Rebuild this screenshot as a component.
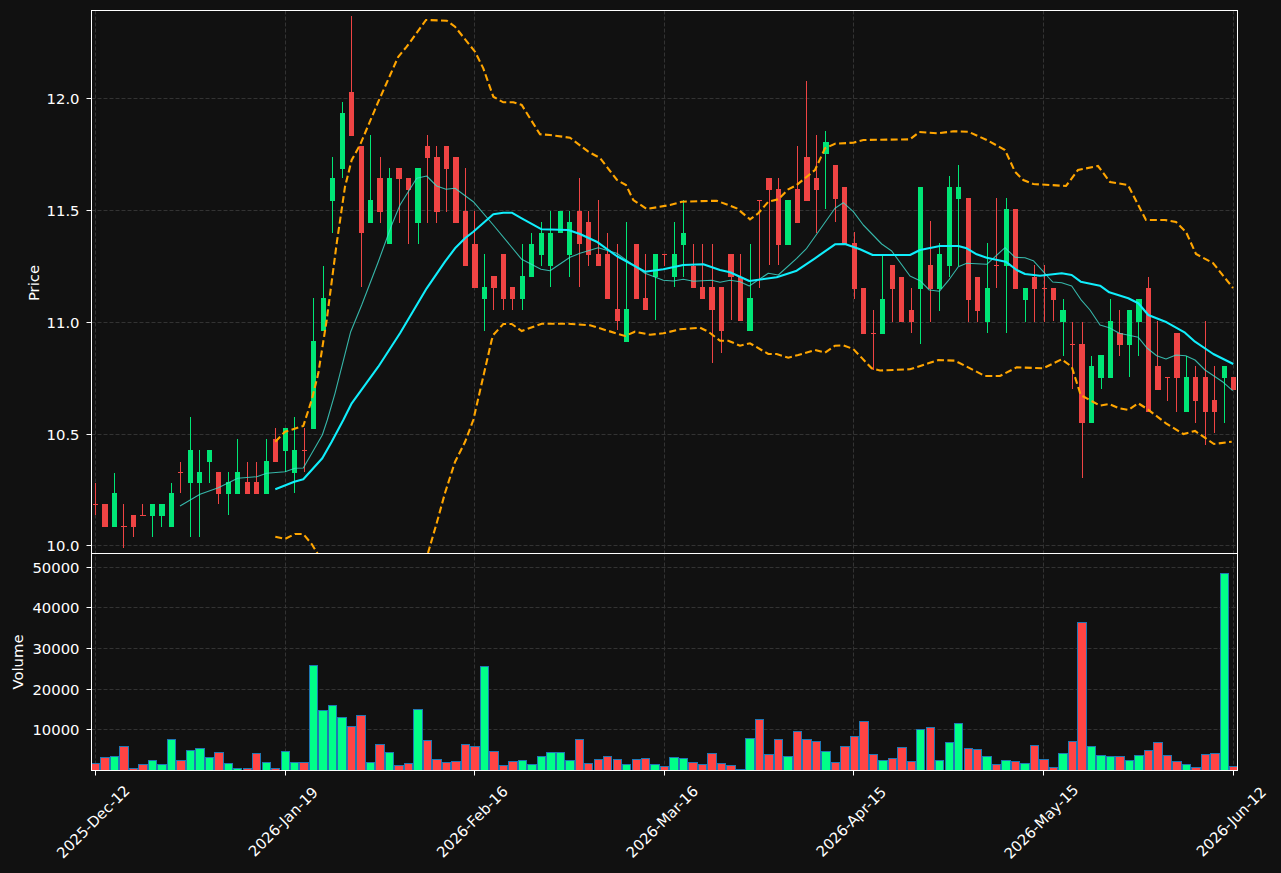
const UP_BODY = "#00e676";
const DOWN_BODY = "#ef4444";
const UP_VOL = "#00ff88";
const DOWN_VOL = "#ff4444";

// pixel rows read off the picture: high, body top, body bottom, low, up?
const candles: number[][] = [
  [483,504,504,515,0],[504,504,527,527,0],[473,493,527,527,1],[504,526,526,548,0],[515,515,527,537,0],
  [504,515,515,515,0],[504,504,516,537,1],[504,504,516,527,1],[483,493,527,527,1],[462,472,472,493,0],
  [417,450,483,537,1],[450,472,483,537,1],[450,450,462,483,1],[472,472,494,504,0],[472,482,494,515,1],
  [439,472,494,494,1],[462,482,494,494,0],[462,482,494,494,0],[439,461,494,494,1],[428,439,462,462,0],
  [428,428,451,472,1],[417,450,473,493,1],[428,450,450,472,0],[298,341,429,429,1],[266,298,331,331,1],
  [157,178,201,233,1],[102,113,169,178,1],[16,92,136,136,0],[146,146,233,287,0],[135,200,223,223,1],
  [157,178,212,223,0],[168,178,244,244,1],[168,168,179,223,0],[178,178,190,244,0],[168,168,223,244,1],
  [135,146,158,223,0],[146,157,212,223,0],[146,146,169,212,0],[157,157,223,223,0],[168,211,266,266,0],
  [211,244,288,288,0],[254,287,299,331,1],[276,276,288,310,0],[254,254,299,310,0],[287,287,299,310,0],
  [244,276,299,310,1],[233,244,277,277,1],[222,233,255,266,1],[211,233,266,287,1],[211,211,233,233,1],
  [211,222,255,277,1],[178,211,244,287,0],[211,222,255,266,0],[200,254,266,266,0],[233,254,299,299,0],
  [244,309,321,330,0],[222,309,342,342,1],[244,244,299,299,0],[254,298,310,310,0],[254,254,277,320,1],
  [254,254,254,266,0],[222,254,277,287,1],[200,233,245,277,1],[244,266,288,288,0],[244,287,299,299,0],
  [244,287,310,363,0],[287,287,331,353,0],[254,254,277,320,0],[254,277,321,321,0],[244,298,331,331,1],
  [200,200,200,288,0],[178,178,190,265,0],[178,189,245,265,0],[200,200,245,245,1],[146,189,223,223,0],
  [81,157,201,201,0],[135,178,190,233,0],[131,142,154,209,1],[165,165,199,222,0],[187,187,244,244,0],
  [232,243,289,299,0],[288,288,334,334,0],[310,333,333,370,0],[255,299,334,334,1],[265,265,289,322,0],
  [277,277,322,322,0],[288,310,322,333,0],[187,187,289,344,1],[221,265,289,322,0],[243,254,289,311,1],
  [176,187,266,277,1],[165,187,199,266,1],[198,198,300,322,0],[277,277,311,322,0],[243,288,322,333,1],
  [198,265,265,288,0],[198,209,266,333,1],[209,209,289,289,0],[288,288,300,322,1],[265,277,289,322,0],
  [265,288,288,322,0],[288,288,300,321,0],[299,310,322,356,1],[322,344,344,389,0],[322,344,423,478,0],
  [356,366,423,423,1],[355,355,378,389,1],[299,321,378,378,1],[310,333,345,356,0],[310,310,345,377,1],
  [299,299,322,356,1],[277,288,412,412,0],[321,366,390,390,0],[377,377,377,401,0],[333,333,378,412,0],
  [356,377,412,412,1],[366,377,401,423,0],[321,377,412,445,0],[366,400,412,433,0],[366,366,378,423,1],
  [377,377,390,390,0],
];

const volumeTops = [
  763,757,756,746,768,764,760,764,739,760,750,748,757,752,763,768,768,753,762,768,
  751,762,762,665,710,705,717,726,715,762,744,752,765,763,709,740,759,762,761,744,
  746,666,751,765,761,760,764,756,752,752,760,739,763,759,756,759,764,759,758,764,
  766,757,758,762,764,753,763,765,769,738,719,754,739,756,731,739,741,751,762,746,
  736,721,754,760,758,747,761,729,727,760,742,723,748,749,756,764,760,761,763,745,
  759,767,753,741,622,746,755,756,756,760,755,750,742,755,761,764,767,754,753,573,766,
];

const slowLine = [
  [275.3,489.3],[294.3,481.7],[303.3,479.3],[322.3,458.3],[331.7,441.7],[343.3,420],[351.7,403.3],[378.3,366.7],
  [400,333.3],[426.7,288.3],[445,261.7],[455,248.3],[465,238.3],[473.3,231.7],[493.3,214.3],[503.3,212.7],
  [511.7,212.7],[521.7,218.3],[541.7,229.3],[568.3,230],[580,234],[596.7,241.7],[616.7,256],[626.7,261.7],
  [645,271.7],[663.3,269.3],[683.3,265],[703.3,264.3],[720,270],[730,272.3],[749.3,281],[776.7,277.3],
  [796.7,270.7],[815,258.3],[835,244.3],[845,244],[860,249.3],[872.7,255],[910,255],[920,250],[940,246],
  [958.3,246],[966.7,248.3],[976.7,254.3],[986.7,257.7],[1005.7,261.7],[1016.7,270],[1025,274],[1040,275.7],
  [1061.7,273.3],[1071.7,275],[1080.7,281.7],[1100,285.7],[1109.3,292.3],[1128.3,298.3],[1138.3,303.3],
  [1148.3,315],[1166.7,322.3],[1185,332.7],[1195,341.7],[1213.3,354],[1233.3,364],
];

const fastLine = [
  [180,506],[200,494.3],[218.3,487.7],[237.7,478.3],[256.7,476.7],[266.7,473.3],[285,471.7],[295,468.3],
  [303.3,468],[322.3,435],[327.3,420],[335,393.3],[350.7,331.7],[361.7,305],[378.3,261.7],[391.7,225],
  [400,205],[416.7,178.3],[426.7,176],[436.7,186],[446,189.3],[455,188.3],[473.3,201.7],[493.3,225],
  [521.7,259.3],[541,269.3],[550,270.7],[570,257.3],[580,253.3],[598.3,247.7],[616.7,253.3],[645,273.3],
  [663.3,280.3],[673.3,281],[683.3,279.3],[693.3,281.3],[711.7,280.3],[720,282.3],[730,280.3],[740,281.7],
  [749.3,286],[768.3,273.3],[778.3,275],[796.7,258.3],[806.7,248.3],[835,208.3],[843.3,202.7],[853.3,211.7],
  [863.3,225],[881.7,244],[891.7,251],[910,276],[920,280.7],[929.3,290],[939.3,291.3],[948.3,280.7],
  [958.3,266.7],[966.7,263.3],[986.7,264.3],[1005,247.7],[1015,257.3],[1025,257.7],[1033.3,260.7],
  [1052.7,282],[1061.7,282.7],[1071.7,286],[1080.7,299.3],[1090,310],[1100,325],[1109.3,327.7],[1119.3,333.3],
  [1138.3,337.3],[1147.3,348.3],[1156.7,355.7],[1166,359],[1176,355],[1185.7,355.7],[1195,360],[1205,370],
  [1223.3,382.3],[1232.7,390.7],
];

const upperBand = [
  [275.3,441.7],[285,431.7],[303.3,426],[311.7,400],[318.3,373.3],[326.7,320],[336.7,243.3],[345,186.7],
  [351.7,160],[360,145],[378.3,101.7],[398.3,56.7],[406.7,46.7],[426,20],[446.7,20.7],[455,26.7],[475,51.7],
  [483.3,68.3],[493.3,96.7],[503.3,102.3],[513.3,102.3],[521.7,105],[540,134.3],[550,135],[570,137.7],
  [588.3,151.7],[600,158],[617,180],[626,185],[633.3,200],[646.7,209],[670,205],[681.7,201.7],[716.7,200.7],
  [736.7,208.3],[750,219.3],[758.3,213.3],[768.3,201.7],[778.3,199.3],[788.3,189.3],[796.7,185],[815,170],
  [825,148.3],[835,143.7],[853.3,142.7],[863.3,140],[910,139.3],[919.3,132],[938.3,133.3],[953.3,131.3],
  [968.3,131.7],[986.7,140],[1005,150],[1015,171.7],[1023.3,180],[1033.3,184],[1050,185],[1066,186],
  [1078,170],[1098,166],[1110,182],[1128,185],[1146,220],[1165,220],[1176,222],[1186,232],[1196,254],
  [1213,263],[1233,288],
];

const lowerBand = [
  [275.3,536.7],[285,539],[295,534],[303.3,534],[311.7,544],[319,556],[425,556],[428,553],[437,522],[445,493],
  [455,462],[465,442],[473.3,420],[491.7,340],[493.3,335],[503.3,324],[511.7,324],[521.7,331],[541.7,323.7],
  [568.3,323.7],[590,325.3],[625,336],[635,331.7],[650,334.7],[663.3,333.3],[680,329.3],[700,327.7],
  [708.3,331.7],[720,340.7],[728.3,340.7],[740,345.7],[750,343.3],[768.3,354],[776.7,354],[788.3,357.7],
  [798.3,355],[815,350],[825,352.7],[835,345.7],[843.3,345.3],[853.3,349],[871.7,368.3],[880,370.5],[910,369.3],
  [928.3,363.3],[938.3,360],[955,360.7],[973.3,370],[985,376],[1000,376],[1016.7,367.3],[1043.3,368.3],
  [1061.7,359.3],[1071.7,366.7],[1080.7,395],[1100,405.7],[1109.3,404],[1119.3,408.3],[1128.3,410],
  [1138.3,403.3],[1147.3,409],[1166,423.3],[1183.3,434],[1195,431],[1214,444],[1231.7,441.7],
];

const xTicks = [
  { x: 95.5, label: "2025-Dec-12" },
  { x: 285.5, label: "2026-Jan-19" },
  { x: 474.5, label: "2026-Feb-16" },
  { x: 664.5, label: "2026-Mar-16" },
  { x: 853.5, label: "2026-Apr-15" },
  { x: 1043.5, label: "2026-May-15" },
  { x: 1233.5, label: "2026-Jun-12" },
];
const priceTicks = [
  { y: 98.5, label: "12.0" },
  { y: 210.5, label: "11.5" },
  { y: 322.5, label: "11.0" },
  { y: 434.5, label: "10.5" },
  { y: 545.5, label: "10.0" },
];
const volumeTicks = [
  { y: 567.5, label: "50000" },
  { y: 607.5, label: "40000" },
  { y: 648.5, label: "30000" },
  { y: 689.5, label: "20000" },
  { y: 729.5, label: "10000" },
];

const LEFT = 91.5;
const RIGHT = 1237.5;
const TOP = 10.5;
const SPLIT = 553.5;
const BOTTOM = 770.5;

const barX = (i: number) => 95.5 + i * 9.486;
const pts = (line: number[][]) => line.map(p => p.join(",")).join(" ");
const label = "font-['DejaVu_Sans',sans-serif] text-[14.8px] fill-white";

export default function App() {
  return (
    <div className="w-[1281px] h-[873px] overflow-hidden bg-[#111111]">
      <svg width="1281" height="873" className="block">
        <defs>
          <clipPath id="price-clip">
            <rect x={LEFT} y={TOP} width={RIGHT - LEFT} height={SPLIT - TOP} />
          </clipPath>
          <clipPath id="volume-clip">
            <rect x={LEFT} y={SPLIT} width={RIGHT - LEFT} height={BOTTOM - SPLIT} />
          </clipPath>
        </defs>

        {/* grid */}
        <g stroke="#333333" strokeWidth="1" strokeDasharray="4 2">
          {xTicks.map(t => (
            <line key={t.label} x1={t.x} x2={t.x} y1={TOP} y2={BOTTOM} />
          ))}
          {[...priceTicks, ...volumeTicks].map(t => (
            <line key={t.label} x1={LEFT} x2={RIGHT} y1={t.y} y2={t.y} />
          ))}
        </g>

        {/* candles */}
        <g clipPath="url(#price-clip)">
          {candles.map(([high, top, bottom, low, up], i) => {
            const color = up ? UP_BODY : DOWN_BODY;
            const x = barX(i);
            return (
              <g key={i} shapeRendering="crispEdges">
                <line x1={x} x2={x} y1={high} y2={low} stroke={color} strokeWidth="1" />
                <rect x={x - 2.6} y={top} width="5.2" height={Math.max(bottom - top, 1)} fill={color} />
              </g>
            );
          })}
          <polyline points={pts(fastLine)} fill="none" stroke="#40e0d0" strokeOpacity="0.8" strokeWidth="1.1" strokeLinejoin="round" />
          <polyline points={pts(slowLine)} fill="none" stroke="#10eefc" strokeWidth="2.1" strokeLinejoin="round" />
          <polyline points={pts(upperBand)} fill="none" stroke="#ffa500" strokeWidth="2.1" strokeDasharray="7 3.4" />
          <polyline points={pts(lowerBand)} fill="none" stroke="#ffa500" strokeWidth="2.1" strokeDasharray="7 3.4" />
        </g>

        {/* volume */}
        <g clipPath="url(#volume-clip)" shapeRendering="crispEdges">
          {volumeTops.map((top, i) => (
            <rect
              key={i}
              x={barX(i) - 4.2}
              y={top}
              width="8.4"
              height={BOTTOM - top + 2}
              fill={candles[i][4] ? UP_VOL : DOWN_VOL}
              stroke="#1f77b4"
              strokeWidth="1"
            />
          ))}
        </g>

        {/* frames */}
        <rect x={LEFT} y={TOP} width={RIGHT - LEFT} height={SPLIT - TOP} fill="none" stroke="#ffffff" strokeWidth="1" />
        <rect x={LEFT} y={SPLIT} width={RIGHT - LEFT} height={BOTTOM - SPLIT} fill="none" stroke="#ffffff" strokeWidth="1" />

        {/* axes */}
        <g stroke="#ffffff" strokeWidth="1">
          {[...priceTicks, ...volumeTicks].map(t => (
            <line key={t.label} x1={LEFT - 5} x2={LEFT} y1={t.y} y2={t.y} />
          ))}
          {xTicks.map(t => (
            <line key={t.label} x1={t.x} x2={t.x} y1={BOTTOM} y2={BOTTOM + 5} />
          ))}
        </g>
        {[...priceTicks, ...volumeTicks].map(t => (
          <text key={t.label} x={79.5} y={t.y} textAnchor="end" dominantBaseline="central" className={label}>
            {t.label}
          </text>
        ))}
        {xTicks.map(t => (
          <text
            key={t.label}
            x={t.x - 2.5}
            y={821.5}
            textAnchor="middle"
            dominantBaseline="central"
            transform={`rotate(-45 ${t.x - 2.5} 821.5)`}
            className={label}
          >
            {t.label}
          </text>
        ))}
        <text x={33} y={283} textAnchor="middle" dominantBaseline="central" transform="rotate(-90 33 283)" className={label}>
          Price
        </text>
        <text x={17} y={662} textAnchor="middle" dominantBaseline="central" transform="rotate(-90 17 662)" className={label}>
          Volume
        </text>
      </svg>
    </div>
  );
}
